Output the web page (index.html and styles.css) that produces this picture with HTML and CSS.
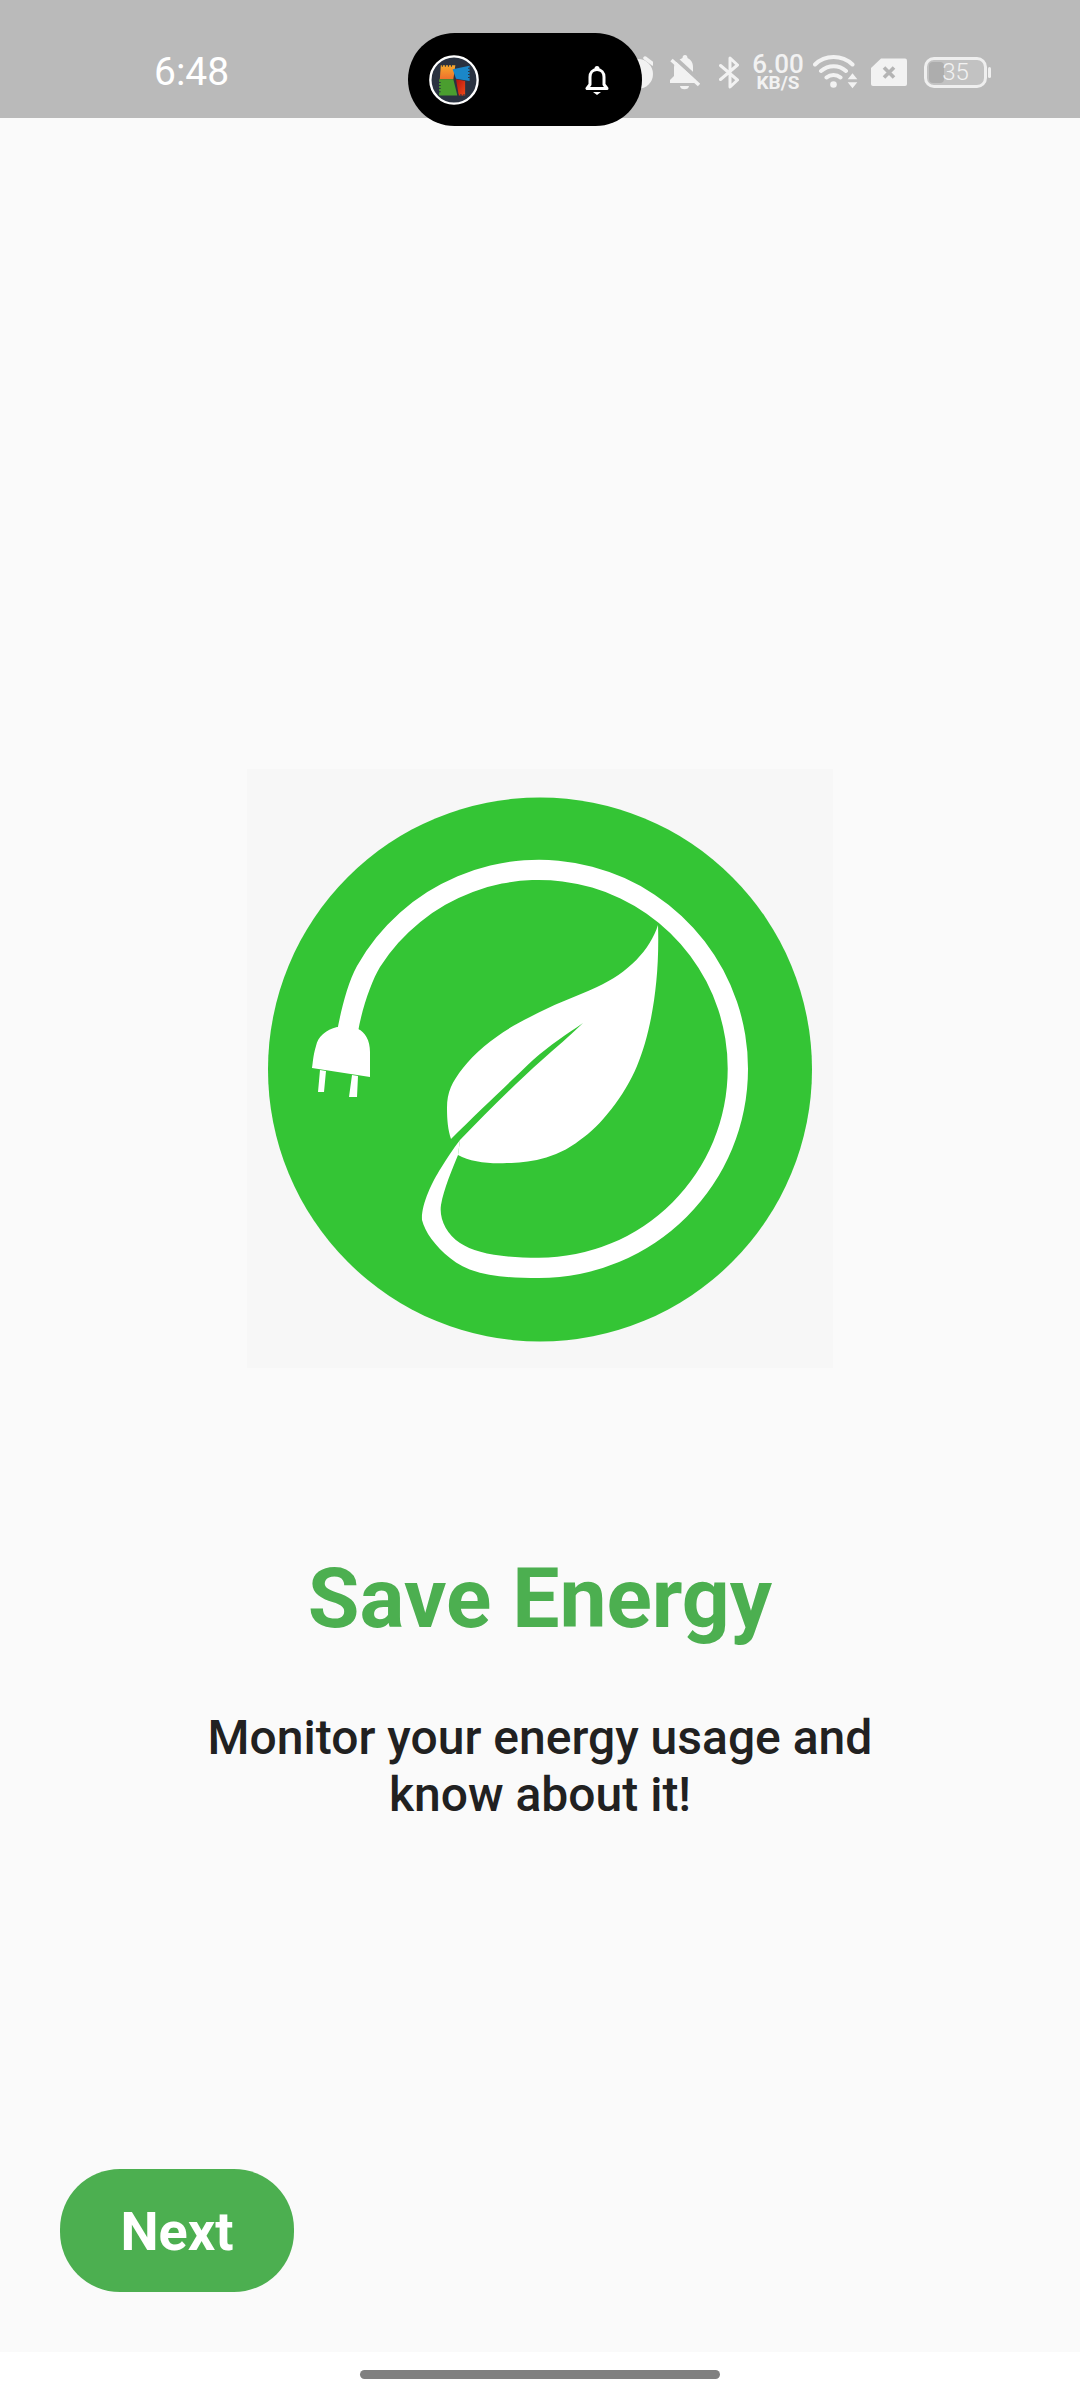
FILE: index.html
```html
<!DOCTYPE html>
<html lang="en">
<head>
<meta charset="utf-8">
<title>Save Energy</title>
<link rel="stylesheet" href="styles.css">
</head>
<body>
<div class="screen">
  <header class="status-bar">
    <span class="clock">6:48</span>
    <div class="island">
      <svg class="island-app" viewBox="28 28 148 148" aria-hidden="true">
        <defs>
          <linearGradient id="patch-orange" x1="0" y1="0" x2="0" y2="1"><stop offset="0" stop-color="#f7a92c"/><stop offset="1" stop-color="#ee6f2d"/></linearGradient>
          <linearGradient id="patch-red" x1="0" y1="0" x2="1" y2="1"><stop offset="0" stop-color="#b5130f"/><stop offset="1" stop-color="#ee4a18"/></linearGradient>
        </defs>
        <circle cx="102" cy="102" r="70" fill="#2a3240" stroke="#fff" stroke-width="7"/>
        <polygon points="63,58 106,58 100,100 60,100" fill="url(#patch-orange)"/>
        <polygon points="98,70 148,60 148,105 108,98" fill="#1b87c9"/>
        <polygon points="58,100 100,100 112,148 58,148" fill="#4a9e2f"/>
        <polygon points="108,100 135,105 135,148 116,148" fill="url(#patch-red)"/>
        <path d="M66 60h36M146 66v34M60 108v36M112 146h22" fill="none" stroke="#2a3240" stroke-width="5" stroke-dasharray="3 6"/>
      </svg>
      <svg class="island-bell" viewBox="0 0 24 29" aria-hidden="true">
        <path d="M12 3.500c-4.500 0-7 3.200-7 7.500v7.500L2 22.500h20l-3-4V11c0-4.300-2.500-7.500-7-7.500z" fill="none" stroke="#fff" stroke-width="3" stroke-linejoin="round"/>
        <circle cx="12" cy="2.500" r="2.500" fill="#fff"/>
        <path d="M8 26h8l-4 3z" fill="#fff"/>
      </svg>
    </div>
    <div class="indicators">
      <svg class="ind-alarm" viewBox="0 0 30 33" aria-hidden="true">
        <circle cx="15" cy="18" r="15" fill="#f2f2f2"/>
        <path d="M22 2l8 6" stroke="#f2f2f2" stroke-width="3.500" stroke-linecap="round"/>
      </svg>
      <svg class="ind-mute" viewBox="0 0 30 35" aria-hidden="true">
        <path d="M15 0c1.500 0 2.500 1 2.500 3C21 4.500 23 8 23 12v8l3 5v3H0v-3l4-4v-9c0-4 5-7.500 8.500-9C12.500 1 13.500 0 15 0z" fill="#f2f2f2"/>
        <path d="M10 31h9c0 2-2 3.300-4.500 3.300S10 33 10 31z" fill="#f2f2f2"/>
        <path d="M4.500 2.500L31 27" stroke="#bababa" stroke-width="4"/>
        <path d="M1.500 5L29 30" stroke="#f2f2f2" stroke-width="3.500"/>
      </svg>
      <svg class="ind-bt" viewBox="0 0 20 33" aria-hidden="true">
        <path d="M1.500 9.500L18.500 24 11 31V2l7.500 7L1.500 23.500" fill="none" stroke="#f2f2f2" stroke-width="3" stroke-linejoin="round" stroke-linecap="round"/>
      </svg>
      <div class="speed">
        <span class="speed-value">6.00</span>
        <span class="speed-unit">KB/S</span>
      </div>
      <svg class="ind-wifi" viewBox="0 0 45 34" aria-hidden="true">
        <path d="M2 9.500C12 -0.500 29 -0.500 39.500 9.500M8 16c7.500 -6.500 18 -6.500 25 0M13.500 22.500c4 -3.500 10 -3.500 14 0" fill="none" stroke="#f2f2f2" stroke-width="4" stroke-linecap="round"/>
        <circle cx="20.500" cy="29.500" r="3.300" fill="#f2f2f2"/>
        <path d="M39.500 18.300l4.800 6h-9.600zM39.500 33.300l4.800 -6h-9.600z" fill="#f2f2f2"/>
      </svg>
      <svg class="ind-sim" viewBox="0 0 36 29" aria-hidden="true">
        <path d="M10 .5h24a2 2 0 0 1 2 2V26a2 2 0 0 1-2 2H2a2 2 0 0 1-2-2V10z" fill="#f2f2f2"/>
        <path d="M13 9.500l10 10M23 9.500l-10 10" stroke="#b4b4b4" stroke-width="3.600"/>
      </svg>
      <div class="battery">
        <div class="battery-cell">
          <span class="battery-fill"></span>
          <span class="battery-level">35</span>
        </div>
        <span class="battery-nub"></span>
      </div>
    </div>
  </header>

  <main class="intro">
    <div class="intro-art">
      <svg class="logo" viewBox="247 769 586 599" role="img" aria-label="Leaf and power cord">
        <rect x="247" y="769" width="586" height="599" fill="#f7f7f7"/>
        <circle cx="540" cy="1069.500" r="272" fill="#34c535"/>
        <g fill="#fff">
          <path d="M337 1032C340 1015 347 984 357 966A209 209 0 0 1 748 1069A209 209 0 0 1 539 1278C500 1278 470 1275 450 1258C435 1246 425 1232 422 1220C421 1205 432 1182 441 1168C447 1158 453 1149 460 1140L458 1155C452 1170 444 1188 441 1205C439 1218 446 1234 460 1243C475 1253 500 1257.700 539 1257.700A188.700 188.700 0 0 0 727.700 1069A188.700 188.700 0 0 0 380 967C372 980 362 1008 358 1032Z"/>
          <path d="M658 925C650 950 628 973 597 987C575 997 552 1005 530 1017C505 1029 478 1048 463 1068C452 1082 447 1092 447 1108C447 1120 448 1130 451 1139C480 1110 510 1082 533 1060C550 1045 567 1034 583 1023C570 1036 555 1048 542 1060C515 1084 487 1112 460 1140L458 1155C470 1162 490 1164 507 1163C525 1163 555 1160 580 1140C600 1127 625 1095 637 1066C650 1035 660 985 658 925Z"/>
          <path d="M337 1027C326 1030 318 1036 316 1046C313 1056 313 1062 312 1068L370 1077V1052C370 1040 365 1032 358 1029Z"/>
          <path d="M320 1070L326 1071L324 1092L318 1092ZM352 1075L358 1076L357 1097L349 1097Z"/>
        </g>
      </svg>
    </div>
    <h1 class="intro-title">Save Energy</h1>
    <p class="intro-text">Monitor your energy usage and<br>know about it!</p>
    <button class="next-button" type="button">Next</button>
  </main>

  <footer class="nav-bar">
    <span class="home-handle"></span>
  </footer>
</div>
</body>
</html>
```

FILE: styles.css
```css
* {
  box-sizing: border-box;
}

html,
body {
  margin: 0;
  padding: 0;
  background: #fafafa;
}

body {
  font-family: Roboto, "Liberation Sans", sans-serif;
}

.screen {
  width: 1080px;
  height: 2400px;
  display: flex;
  flex-direction: column;
  position: relative;
  overflow: hidden;
}

/* Status bar */
.status-bar {
  flex: none;
  height: 118px;
  padding: 26px 89px 0 154px;
  display: flex;
  align-items: center;
  justify-content: space-between;
  background: #bababa;
}

.clock {
  font-size: 39px;
  line-height: 44px;
  color: #fff;
}

.island {
  position: absolute;
  top: 33px;
  left: 408px;
  z-index: 2;
  width: 234px;
  height: 93px;
  padding: 0 33px 0 21px;
  display: flex;
  align-items: center;
  justify-content: space-between;
  border-radius: 47px;
  background: #000;
}

.island-app {
  width: 50px;
  height: 50px;
}

.island-bell {
  width: 24px;
  height: 29px;
  margin-top: 1px;
}

.indicators {
  display: flex;
  align-items: center;
}

.ind-alarm {
  width: 30px;
  height: 33px;
}

.ind-mute {
  width: 30px;
  height: 35px;
  margin-left: 17px;
}

.ind-bt {
  width: 20px;
  height: 33px;
  margin-left: 19px;
}

.speed {
  width: 50px;
  margin-left: 14px;
  display: flex;
  flex-direction: column;
  align-items: center;
  color: #f2f2f2;
}

.speed-value {
  font-size: 26px;
  font-weight: 500;
  line-height: 21px;
}

.speed-unit {
  font-size: 19px;
  font-weight: 700;
  line-height: 15px;
}

.ind-wifi {
  width: 45px;
  height: 34px;
  margin-left: 10px;
}

.ind-sim {
  width: 36px;
  height: 29px;
  margin-left: 13px;
}

.battery {
  margin-left: 17px;
  display: flex;
  align-items: center;
  gap: 1px;
}

.battery-cell {
  position: relative;
  width: 63px;
  height: 31px;
  display: flex;
  align-items: center;
  justify-content: center;
  border: 3px solid #efefef;
  border-radius: 10px;
  background: #c2c2c2;
}

.battery-fill {
  position: absolute;
  top: 2px;
  bottom: 2px;
  left: 2px;
  width: 15px;
  border-radius: 4px;
  background: #adadad;
}

.battery-level {
  position: relative;
  font-size: 24px;
  font-weight: 300;
  line-height: 24px;
  color: #f2f2f2;
}

.battery-nub {
  width: 3px;
  height: 11px;
  border-radius: 2px;
  background: #efefef;
}

/* Onboarding page */
.intro {
  flex: 1;
  display: flex;
  flex-direction: column;
  align-items: center;
  background: #fafafa;
}

.intro-art {
  margin-top: 651px;
  line-height: 0;
}

.logo {
  width: 586px;
  height: 599px;
}

.intro-title {
  margin: 182px 0 0;
  font-size: 84px;
  font-weight: 700;
  line-height: 98px;
  color: #4caf50;
}

.intro-text {
  margin: 61px 0 0;
  font-size: 48px;
  font-weight: 500;
  line-height: 57px;
  text-align: center;
  color: #212121;
}

.next-button {
  align-self: flex-start;
  width: 234px;
  height: 123px;
  margin: auto 0 60px 60px;
  padding: 2px 0 0;
  border: 0;
  border-radius: 60px;
  background: #4caf50;
  font-family: inherit;
  font-size: 54px;
  font-weight: 700;
  color: #fff;
}

/* Gesture bar */
.nav-bar {
  flex: none;
  height: 48px;
  padding-top: 18px;
  display: flex;
  justify-content: center;
  background: #fff;
}

.home-handle {
  width: 360px;
  height: 9px;
  border-radius: 5px;
  background: #808080;
}
```
